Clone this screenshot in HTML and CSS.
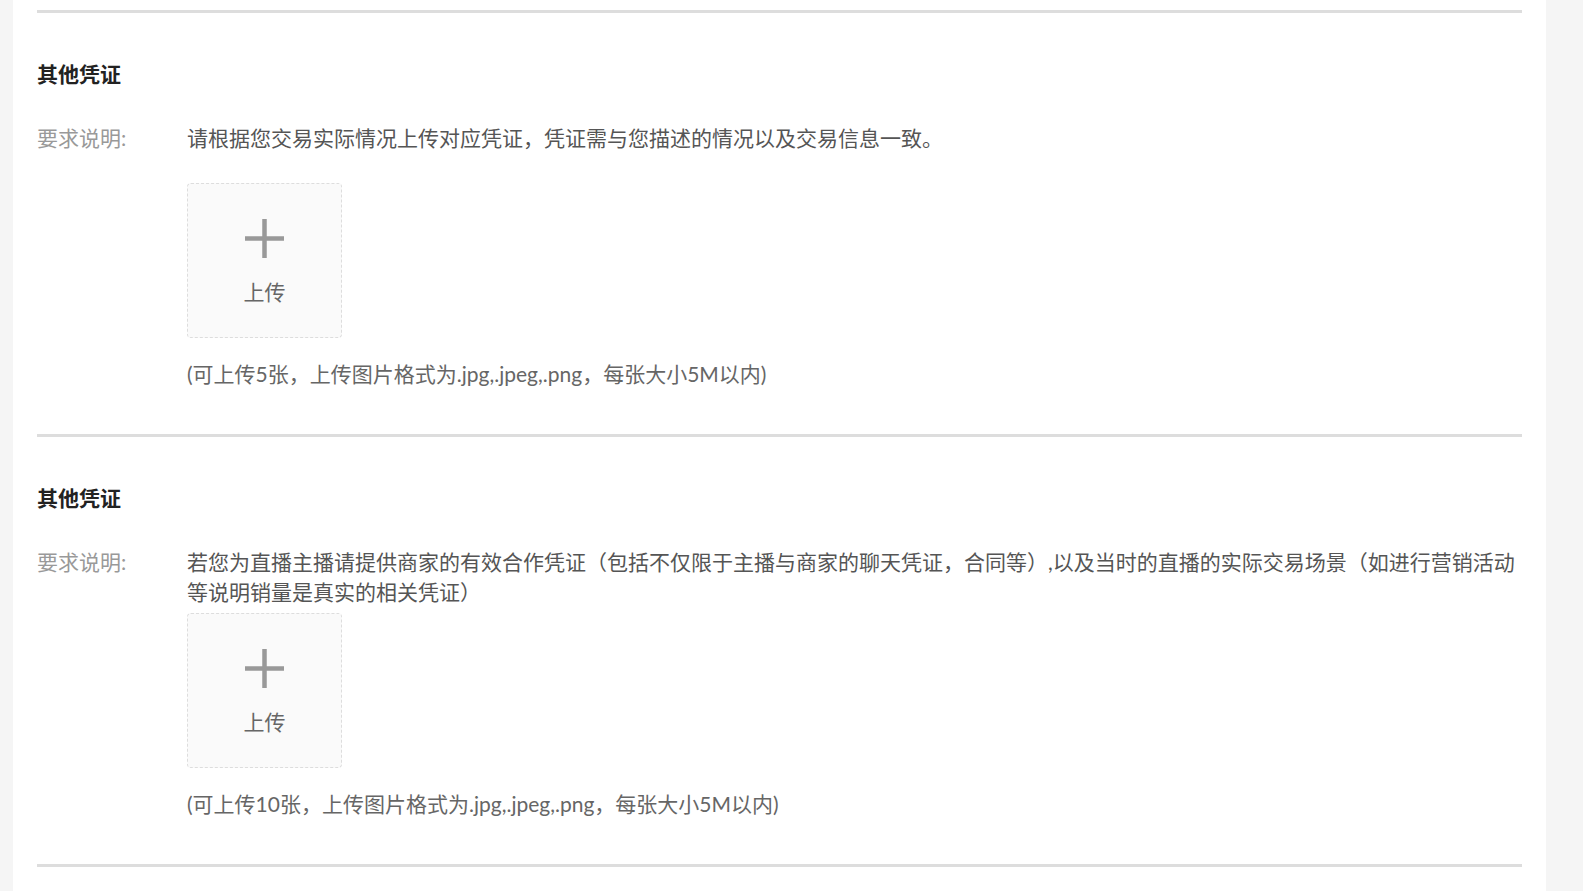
FILE: index.html
```html
<!DOCTYPE html>
<html lang="zh-CN">
<head>
<meta charset="utf-8">
<title>其他凭证</title>
<link rel="stylesheet" href="styles.css">
</head>
<body>
<div class="page">
  <div class="card">
    <section class="section">
      <h2 class="section-title">其他凭证</h2>
      <div class="row">
        <div class="label">要求说明:</div>
        <div class="content">
          <div class="desc">请根据您交易实际情况上传对应凭证，凭证需与您描述的情况以及交易信息一致。</div>
          <div class="upload">
            <svg class="plus" width="39" height="39" viewBox="0 0 39 39"><path d="M19.5 0V39M0 19.5H39" stroke="#999" stroke-width="4.5" fill="none"/></svg>
            <span class="upload-text">上传</span>
          </div>
          <div class="hint">(可上传5张，上传图片格式为.jpg,.jpeg,.png，每张大小5M以内)</div>
        </div>
      </div>
    </section>
    <section class="section">
      <h2 class="section-title">其他凭证</h2>
      <div class="row">
        <div class="label">要求说明:</div>
        <div class="content">
          <div class="desc">若您为直播主播请提供商家的有效合作凭证（包括不仅限于主播与商家的聊天凭证，合同等）,以及当时的直播的实际交易场景（如进行营销活动等说明销量是真实的相关凭证）</div>
          <div class="upload">
            <svg class="plus" width="39" height="39" viewBox="0 0 39 39"><path d="M19.5 0V39M0 19.5H39" stroke="#999" stroke-width="4.5" fill="none"/></svg>
            <span class="upload-text">上传</span>
          </div>
          <div class="hint">(可上传10张，上传图片格式为.jpg,.jpeg,.png，每张大小5M以内)</div>
        </div>
      </div>
    </section>
    <div class="divider"></div>
  </div>
</div>
</body>
</html>
```

FILE: styles.css
```css
* { box-sizing: border-box; }
html, body {
  margin: 0;
  padding: 0;
  height: 100%;
  background: #f5f5f5;
}
body {
  font-family: Lato, "Noto Sans CJK SC", sans-serif;
  font-size: 21px;
  color: #666;
  overflow: hidden;
}
.page {
  padding-left: 13px;
  height: 100%;
}
.card {
  width: 1533px;
  min-height: 100%;
  background: #fff;
  padding: 10px 24px 0;
}
.section {
  border-top: 3px solid #ddd;
  padding-bottom: 45px;
}
.divider {
  border-top: 3px solid #ddd;
}
.section-title {
  margin: 45px 0 0;
  font-family: "Noto Sans CJK SC", sans-serif;
  font-size: 21px;
  line-height: 30px;
  font-weight: 700;
  color: #222;
}
.row {
  display: flex;
  margin-top: 35px;
}
.label {
  width: 150px;
  flex: none;
  line-height: 30px;
  color: #999;
}
.content {
  flex: 1;
  min-width: 0;
}
.desc {
  line-height: 30px;
  min-height: 60px;
  padding-bottom: 6px;
  color: #555;
}
.upload {
  width: 155px;
  height: 155px;
  border: 1px dashed #ddd;
  border-radius: 4px;
  background: #fafafa;
  display: flex;
  flex-direction: column;
  align-items: center;
  padding-top: 35px;
}
.plus {
  display: block;
}
.upload-text {
  margin-top: 19px;
  line-height: 30px;
  color: #666;
}
.hint {
  margin-top: 21px;
  line-height: 30px;
  color: #666;
}
```
